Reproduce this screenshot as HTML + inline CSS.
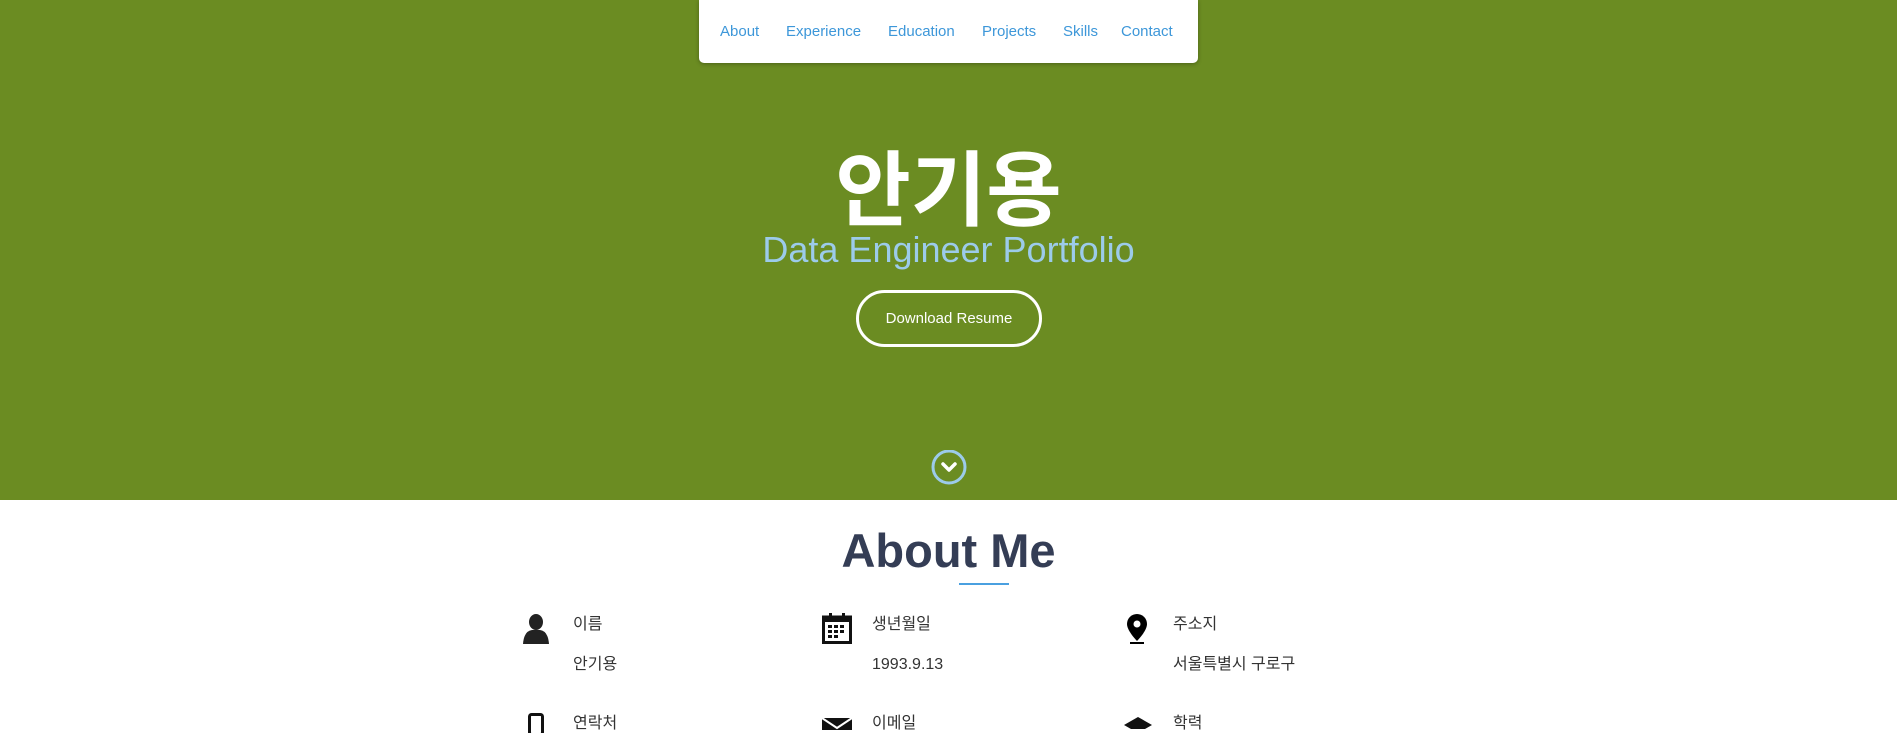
<!DOCTYPE html>
<html><head><meta charset="utf-8"><style>
*{margin:0;padding:0;box-sizing:border-box}
body{width:1897px;height:726px;overflow:hidden;background:#fff;font-family:"Liberation Sans","Noto Sans CJK KR",sans-serif;position:relative}
.hero{position:absolute;left:0;top:0;width:1897px;height:500px;background:#6b8c22}
.nav{position:absolute;left:699px;top:0;width:499px;height:63px;background:#fff;border-radius:0 0 5px 5px;box-shadow:0 1px 4px rgba(0,0,0,.3)}
.nav span{position:absolute;top:23px;font-size:15px;color:#3d97d9}
.name{position:absolute;left:0;width:1897px;top:134px;text-align:center;color:#fff;font-size:82px;font-weight:bold;line-height:100px;font-family:"Noto Sans CJK KR",sans-serif}
.sub{position:absolute;left:0;width:1897px;top:227px;text-align:center;color:#9ccbea;font-size:36px;line-height:46px}
.btn{position:absolute;left:856px;top:290px;width:186px;height:57px;border:3px solid #fff;border-radius:30px;color:#fff;font-size:15px;text-align:center;line-height:51px}
.chev{position:absolute;left:931px;top:450px}
h2{position:absolute;left:0;width:1897px;top:521px;text-align:center;font-size:47px;color:#343d55;font-weight:bold;line-height:60px}
.ul{position:absolute;left:959px;top:583px;width:50px;height:2px;background:#4aa0e0}
.t{position:absolute;font-size:16px;color:#333;line-height:20px}
svg.i{position:absolute}
</style></head><body>
<div class="hero"></div>
<div class="nav">
<span style="left:21px">About</span><span style="left:87px">Experience</span><span style="left:189px">Education</span><span style="left:283px">Projects</span><span style="left:364px">Skills</span><span style="left:422px">Contact</span>
</div>
<div class="name">안기용</div>
<div class="sub">Data Engineer Portfolio</div>
<div class="btn">Download Resume</div>
<svg class="chev" width="36" height="36" viewBox="0 0 36 36"><circle cx="18" cy="17" r="16" fill="none" stroke="#9ccbea" stroke-width="3"/><path d="M12 14l6 6 6-6" fill="none" stroke="#fff" stroke-width="3.5" stroke-linecap="round" stroke-linejoin="round"/></svg>
<h2>About Me</h2>
<div class="ul"></div>
<svg class="i" style="left:522px;top:614px" width="28" height="30" viewBox="0 0 28 30"><ellipse cx="14" cy="8" rx="7" ry="8" fill="#222"/><path d="M1 30 Q2 17 10 16 L18 16 Q26 17 27 30Z" fill="#222"/></svg>
<div class="t" style="left:573px;top:615px">이름</div>
<div class="t" style="left:573px;top:655px">안기용</div>
<svg class="i" style="left:822px;top:613px" width="30" height="31" viewBox="0 0 30 31"><rect x="1.5" y="4" width="27" height="25.5" fill="none" stroke="#111" stroke-width="3"/><rect x="1" y="4" width="28" height="5" fill="#111"/><rect x="7" y="0" width="3" height="6" fill="#111"/><rect x="20" y="0" width="3" height="6" fill="#111"/><g fill="#111"><rect x="6" y="12" width="4" height="3"/><rect x="12" y="12" width="4" height="3"/><rect x="18" y="12" width="4" height="3"/><rect x="6" y="17" width="4" height="3"/><rect x="12" y="17" width="4" height="3"/><rect x="18" y="17" width="4" height="3"/><rect x="6" y="22" width="4" height="3"/><rect x="12" y="22" width="4" height="3"/></g></svg>
<div class="t" style="left:872px;top:615px">생년월일</div>
<div class="t" style="left:872px;top:655px">1993.9.13</div>
<svg class="i" style="left:1127px;top:614px" width="20" height="30" viewBox="0 0 20 30"><path d="M10 0A10 10 0 0 0 0 10C0 17 10 27 10 27S20 17 20 10A10 10 0 0 0 10 0Z" fill="#000"/><circle cx="10" cy="10" r="3.5" fill="#fff"/><rect x="3" y="28" width="14" height="2" fill="#000"/></svg>
<div class="t" style="left:1173px;top:615px">주소지</div>
<div class="t" style="left:1173px;top:655px">서울특별시 구로구</div>
<svg class="i" style="left:528px;top:713px" width="16" height="20"><rect x="1.5" y="1.5" width="13" height="20" rx="2" fill="none" stroke="#111" stroke-width="3"/></svg>
<div class="t" style="left:573px;top:714px">연락처</div>
<svg class="i" style="left:822px;top:718px" width="30" height="12"><path d="M0 0H30V12H0Z" fill="#111"/><path d="M0 0L15 10L30 0" fill="none" stroke="#fff" stroke-width="2"/></svg>
<div class="t" style="left:872px;top:714px">이메일</div>
<svg class="i" style="left:1124px;top:717px" width="28" height="12"><path d="M14 0L28 8L14 16L0 8Z" fill="#111"/></svg>
<div class="t" style="left:1173px;top:714px">학력</div>
</body></html>
